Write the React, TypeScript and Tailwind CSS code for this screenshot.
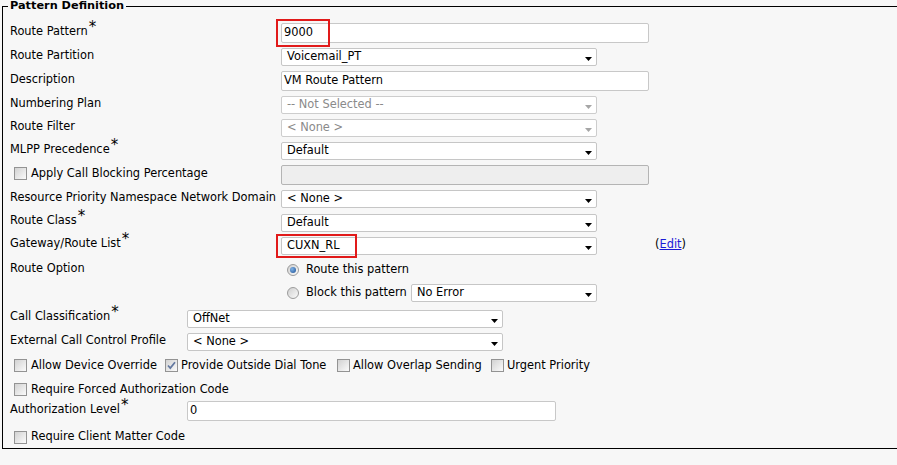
import clsx from "clsx";
import { ReactNode } from "react";

const Star = () => (
  <span className="ml-[1px] align-top text-[15px] leading-[9px]">*</span>
);

const Select = ({
  value,
  w,
  disabled,
}: {
  value: string;
  w: string;
  disabled?: boolean;
}) => (
  <div
    className={clsx(
      "relative flex h-[18px] shrink-0 items-center rounded-[2px] border bg-white pl-[5px]",
      w,
      disabled ? "border-[#cdcdcd] text-[#8a8a8a]" : "border-[#c6c6c6] text-black"
    )}
  >
    <span>{value}</span>
    <svg className="absolute right-[4px] top-[8px]" width="7" height="4" viewBox="0 0 7 4">
      <path d="M0 0h7L3.5 4z" fill={disabled ? "#a6a6a6" : "#000"} />
    </svg>
  </div>
);

const Input = ({ value, w, disabled }: { value?: string; w: string; disabled?: boolean }) => (
  <div
    className={clsx(
      "flex h-[20px] shrink-0 items-center rounded-[2px] border pl-[2px]",
      w,
      disabled ? "border-[#b4b4b4] bg-[#eeeeee]" : "border-[#c8c8c8] bg-white"
    )}
  >
    {value}
  </div>
);

const Check = ({ checked }: { checked?: boolean }) => (
  <span className="flex h-[13px] w-[13px] shrink-0 items-center justify-center border border-[#939393] bg-linear-to-br from-[#d2d2d2] to-[#fbfbfb]">
    {checked && (
      <svg width="9" height="9" viewBox="0 0 9 9">
        <path d="M1 4.5l2.3 2.6L8 1.2" stroke="#6378a0" strokeWidth="1.7" fill="none" />
      </svg>
    )}
  </span>
);

const Radio = ({ checked }: { checked?: boolean }) => (
  <span className="flex h-[12px] w-[12px] shrink-0 items-center justify-center rounded-full border border-[#9b9b9b] bg-linear-to-br from-[#cfcfcf] to-[#fbfbfb]">
    {checked && (
      <span className="h-[6px] w-[6px] rounded-full bg-[radial-gradient(circle_at_35%_35%,#7fb2e6,#1b4f94)]" />
    )}
  </span>
);

const Row = ({
  h,
  label,
  lw = "w-[271px]",
  children,
}: {
  h: string;
  label?: ReactNode;
  lw?: string;
  children?: ReactNode;
}) => (
  <div className={clsx("flex items-center", h)}>
    <div className={clsx("shrink-0 pb-[3px]", lw)}>{label}</div>
    {children}
  </div>
);

export default function App() {
  return (
    <div className="h-[465px] w-[897px] overflow-hidden bg-[#f7f7f7] font-['DejaVu_Sans',sans-serif] text-[11.4px] text-black">
      <fieldset className="ml-[2px] w-[920px] border border-black pl-[5px]">
        <legend className="px-[2px] text-[11.3px] font-bold leading-[12px] text-black">
          Pattern Definition
        </legend>
        <div className="pl-[2px] pt-[9px]">
          <Row h="h-[24px]" label={<>Route Pattern<Star /></>}>
            <div className="relative">
              <Input value="9000" w="w-[368px]" />
              <div className="absolute -left-[5px] -top-[4px] h-[28px] w-[54px] border-2 border-[#e11a1a]" />
            </div>
          </Row>
          <Row h="h-[24px]" label="Route Partition">
            <Select value="Voicemail_PT" w="w-[316px]" />
          </Row>
          <Row h="h-[24px]" label="Description">
            <Input value="VM Route Pattern" w="w-[368px]" />
          </Row>
          <Row h="h-[24px]" label="Numbering Plan">
            <Select value="-- Not Selected --" w="w-[316px]" disabled />
          </Row>
          <Row h="h-[22px]" label="Route Filter">
            <Select value="< None >" w="w-[316px]" disabled />
          </Row>
          <Row h="h-[24px]" label={<>MLPP Precedence<Star /></>}>
            <Select value="Default" w="w-[316px]" />
          </Row>
          <Row
            h="h-[24px]"
            label={
              <div className="flex items-center gap-[4px] pl-[4px]">
                <Check />
                <span>Apply Call Blocking Percentage</span>
              </div>
            }
          >
            <Input w="w-[368px]" disabled />
          </Row>
          <Row h="h-[24px]" label="Resource Priority Namespace Network Domain">
            <Select value="< None >" w="w-[316px]" />
          </Row>
          <Row h="h-[23px]" label={<>Route Class<Star /></>}>
            <Select value="Default" w="w-[316px]" />
          </Row>
          <Row h="h-[23px]" label={<>Gateway/Route List<Star /></>}>
            <div className="relative">
              <Select value="CUXN_RL" w="w-[316px]" />
              <div className="absolute -left-[5px] -top-[3px] h-[24px] w-[81px] border-2 border-[#e11a1a]" />
            </div>
            <span className="ml-[58px] pb-[2px]">
              (<span className="text-[#1a1ad6] underline">Edit</span>)
            </span>
          </Row>
          <Row h="h-[26px]" label="Route Option">
            <div className="flex items-center gap-[7px] pl-[6px]">
              <Radio checked />
              <span>Route this pattern</span>
            </div>
          </Row>
          <Row h="h-[20px]">
            <div className="flex items-center pl-[6px]">
              <Radio />
              <span className="ml-[7px] w-[105px]">Block this pattern</span>
              <Select value="No Error" w="w-[186px]" />
            </div>
          </Row>
          <div className="mt-[4px]">
            <Row h="h-[23px]" lw="w-[177px]" label={<>Call Classification<Star /></>}>
              <Select value="OffNet" w="w-[316px]" />
            </Row>
            <Row h="h-[24px]" lw="w-[177px]" label="External Call Control Profile">
              <Select value="< None >" w="w-[316px]" />
            </Row>
          </div>
          <div className="flex h-[24px] items-center pl-[4px]">
            <label className="flex w-[151px] items-center gap-[4px]">
              <Check />
              <span>Allow Device Override</span>
            </label>
            <label className="flex w-[172px] items-center gap-[3px]">
              <Check checked />
              <span>Provide Outside Dial Tone</span>
            </label>
            <label className="flex w-[154px] items-center gap-[3px]">
              <Check />
              <span>Allow Overlap Sending</span>
            </label>
            <label className="flex items-center gap-[3px]">
              <Check />
              <span>Urgent Priority</span>
            </label>
          </div>
          <div className="flex h-[23px] items-center gap-[4px] pl-[4px]">
            <Check />
            <span>Require Forced Authorization Code</span>
          </div>
          <Row h="h-[20px]" lw="w-[177px]" label={<>Authorization Level<Star /></>}>
            <Input value="0" w="w-[369px]" />
          </Row>
          <div className="mt-[5px] flex h-[22px] items-center gap-[4px] pl-[4px]">
            <Check />
            <span>Require Client Matter Code</span>
          </div>
        </div>
      </fieldset>
    </div>
  );
}
